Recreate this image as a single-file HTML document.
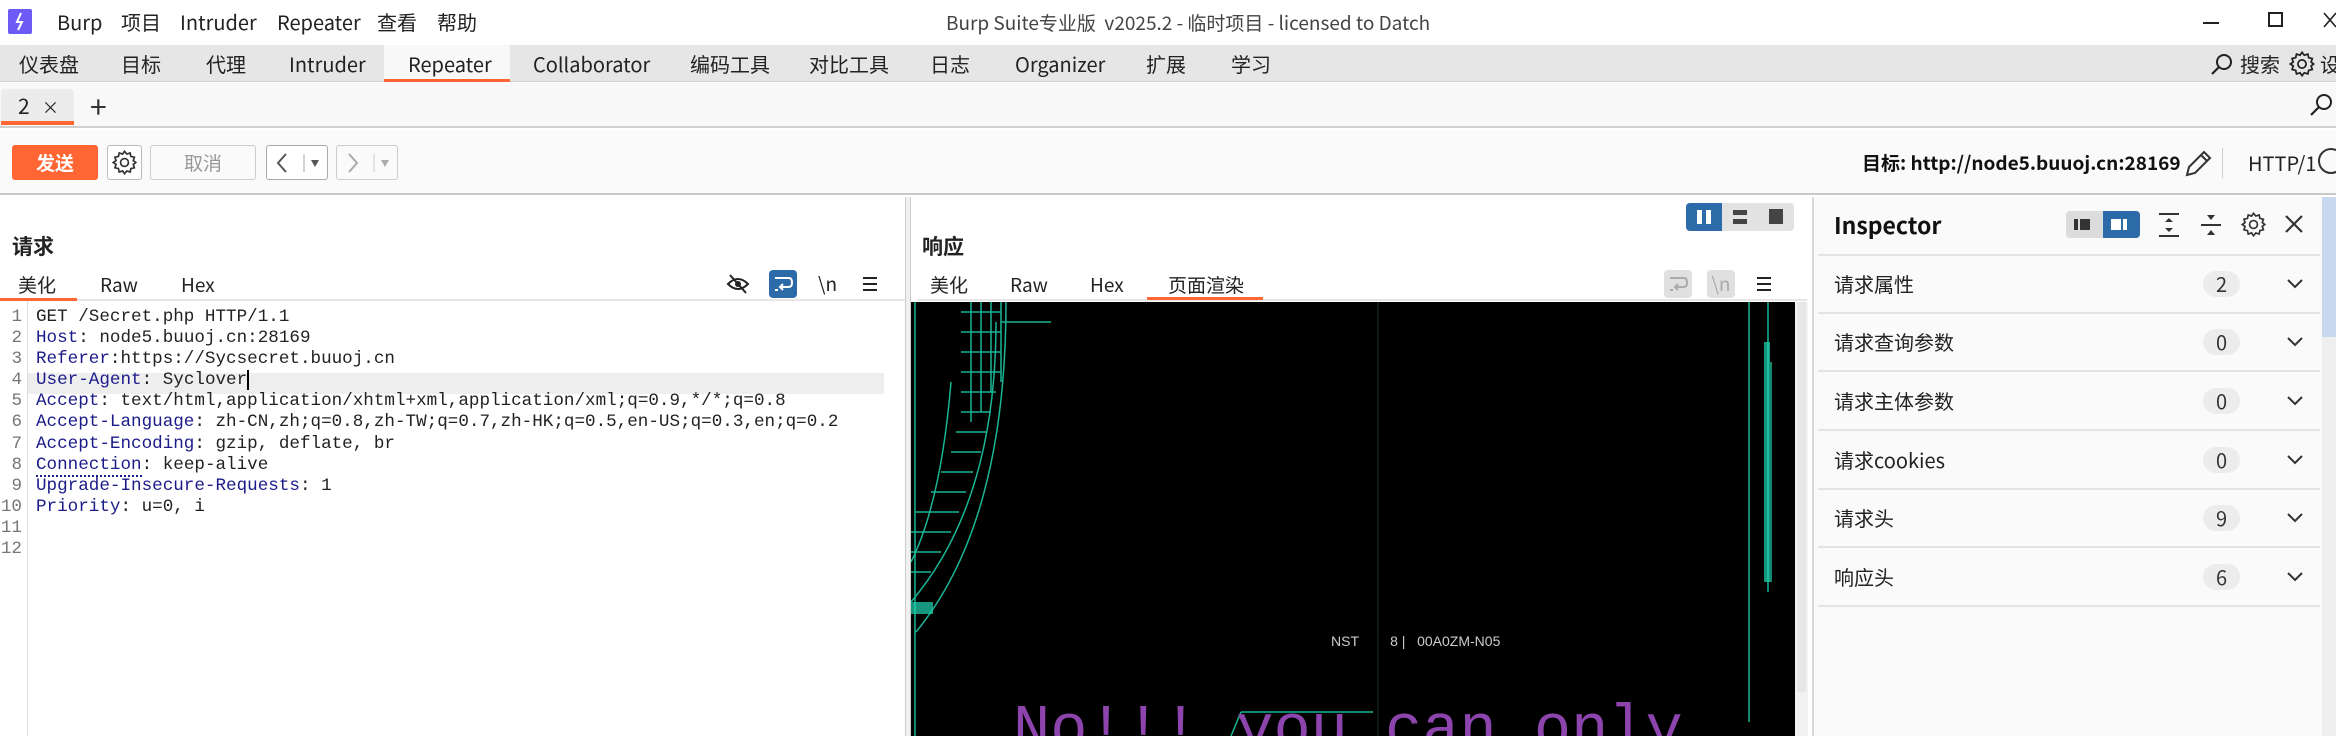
<!DOCTYPE html>
<html><head><meta charset="utf-8"><style>
*{margin:0;padding:0;box-sizing:border-box}
body{width:2336px;height:736px;overflow:hidden;background:#fff;font-family:"Noto Sans CJK SC","Liberation Sans",sans-serif;color:#222;position:relative}
.a{position:absolute;white-space:nowrap;line-height:1}
.f20{font-size:20px}
.mono{font-family:"Liberation Mono","DejaVu Sans Mono",monospace;font-size:17.6px}
.k{color:#1b1b8a}
.ln{color:#777;text-align:right;width:22px}
.row{position:absolute;left:1818px;width:502px;height:58px;border-bottom:2px solid #e3e3e3}
.row .l{position:absolute;left:16px;top:18px;font-size:20px;line-height:1}
.row .b{position:absolute;left:385px;top:15px;width:37px;height:26px;border-radius:13px;background:#ececec;text-align:center;font-size:20px;line-height:26px;color:#333}
.row svg{position:absolute;left:468px;top:22px}
</style></head><body>

<!-- title bar -->
<div class="a" style="left:0;top:0;width:2336px;height:45px;background:#fff"></div>
<div class="a" style="left:8px;top:9px;width:24px;height:25px;background:#6c5cf5;border-radius:2px"></div>
<svg class="a" style="left:8px;top:9px" width="24" height="25"><path d="M13 4 L9 13 L14 13 L10 21" stroke="#fff" stroke-width="2" fill="none"/></svg>
<div class="a f20" style="left:57px;top:12px">Burp</div>
<div class="a f20" style="left:121px;top:12px">项目</div>
<div class="a f20" style="left:180px;top:12px">Intruder</div>
<div class="a f20" style="left:277px;top:12px">Repeater</div>
<div class="a f20" style="left:377px;top:12px">查看</div>
<div class="a f20" style="left:437px;top:12px">帮助</div>
<div class="a" style="left:946px;top:13px;font-size:19px;color:#444">Burp Suite专业版&nbsp; v2025.2 - 临时项目 - licensed to Datch</div>
<div class="a" style="left:2203px;top:22px;width:16px;height:2px;background:#222"></div>
<div class="a" style="left:2268px;top:12px;width:15px;height:15px;border:2px solid #222"></div>
<svg class="a" style="left:2322px;top:12px" width="14" height="16"><path d="M2 1 L14 15 M14 1 L2 15" stroke="#222" stroke-width="1.6"/></svg>

<!-- nav bar -->
<div class="a" style="left:0;top:45px;width:2336px;height:37px;background:#e6e6e6;border-bottom:1px solid #d0d0d0"></div>
<div class="a" style="left:384px;top:45px;width:126px;height:37px;background:#f8f8f8;border-bottom:3px solid #ff6633"></div>
<div class="a f20" style="left:19px;top:54px">仪表盘</div>
<div class="a f20" style="left:121px;top:54px">目标</div>
<div class="a f20" style="left:206px;top:54px">代理</div>
<div class="a f20" style="left:289px;top:54px">Intruder</div>
<div class="a f20" style="left:408px;top:54px">Repeater</div>
<div class="a f20" style="left:533px;top:54px">Collaborator</div>
<div class="a f20" style="left:690px;top:54px">编码工具</div>
<div class="a f20" style="left:809px;top:54px">对比工具</div>
<div class="a f20" style="left:930px;top:54px">日志</div>
<div class="a f20" style="left:1015px;top:54px">Organizer</div>
<div class="a f20" style="left:1146px;top:54px">扩展</div>
<div class="a f20" style="left:1231px;top:54px">学习</div>
<svg class="a" style="left:2210px;top:52px" width="24" height="24"><circle cx="14" cy="10" r="7" stroke="#222" stroke-width="2" fill="none"/><path d="M9 15 L2 22" stroke="#222" stroke-width="2.2"/></svg>
<div class="a f20" style="left:2240px;top:54px">搜索</div>
<svg class="a" style="left:2288px;top:50px" width="28" height="28" viewBox="0 0 24 24"><path d="M12 2l2 2.5 3-1 .7 3.1 3.1.7-1 3L22 12l-2.2 1.7 1 3-3.1.7-.7 3.1-3-1L12 22l-1.7-2.5-3 1-.7-3.1-3.1-.7 1-3L2 12l2.5-1.7-1-3 3.1-.7.7-3.1 3 1z" fill="none" stroke="#222" stroke-width="1.5"/><circle cx="12" cy="12" r="3.5" fill="none" stroke="#222" stroke-width="1.5"/></svg>
<div class="a f20" style="left:2320px;top:54px">设</div>

<!-- sub tab bar -->
<div class="a" style="left:0;top:83px;width:2336px;height:45px;background:#f8f8f8;border-bottom:2px solid #d0d0d0"></div>
<div class="a" style="left:1px;top:89px;width:73px;height:36px;background:#ececec;border-radius:4px 4px 0 0;border-bottom:4px solid #ff6633"></div>
<div class="a" style="left:18px;top:96px;font-size:21px">2</div>
<div class="a" style="left:42px;top:98px;font-size:17px">×</div>
<div class="a" style="left:90px;top:90px;font-size:30px;color:#333">+</div>
<svg class="a" style="left:2308px;top:92px" width="26" height="26"><circle cx="16" cy="10" r="7" stroke="#222" stroke-width="2" fill="none"/><path d="M11 15 L3 23" stroke="#222" stroke-width="2.2"/></svg>

<!-- toolbar -->
<div class="a" style="left:0;top:130px;width:2336px;height:65px;background:#fafafa;border-bottom:2px solid #c8c8c8"></div>
<div class="a" style="left:12px;top:145px;width:86px;height:35px;background:#ff6633;border-radius:3px;color:#fff;font-weight:bold;font-size:19px;text-align:center;line-height:35px">发送</div>
<div class="a" style="left:107px;top:145px;width:35px;height:35px;border:1px solid #bbb;border-radius:3px;background:#fff"></div>
<svg class="a" style="left:111px;top:149px" width="27" height="27" viewBox="0 0 24 24"><path d="M12 2l2 2.5 3-1 .7 3.1 3.1.7-1 3L22 12l-2.2 1.7 1 3-3.1.7-.7 3.1-3-1L12 22l-1.7-2.5-3 1-.7-3.1-3.1-.7 1-3L2 12l2.5-1.7-1-3 3.1-.7.7-3.1 3 1z" fill="none" stroke="#333" stroke-width="1.5"/><circle cx="12" cy="12" r="3.5" fill="none" stroke="#333" stroke-width="1.5"/></svg>
<div class="a" style="left:150px;top:145px;width:106px;height:35px;border:1px solid #ccc;border-radius:3px;background:#fafafa;color:#999;font-size:19px;text-align:center;line-height:33px">取消</div>
<div class="a" style="left:266px;top:145px;width:62px;height:35px;border:1px solid #aaa;border-radius:3px;background:#fff"></div>
<svg class="a" style="left:270px;top:150px" width="56" height="26"><path d="M16 4 L8 13 L16 22" stroke="#555" stroke-width="2" fill="none"/><path d="M34 4 V22" stroke="#aaa"/><path d="M41 10 L49 10 L45 17z" fill="#555"/></svg>
<div class="a" style="left:336px;top:145px;width:62px;height:35px;border:1px solid #ccc;border-radius:3px;background:#fafafa"></div>
<svg class="a" style="left:340px;top:150px" width="56" height="26"><path d="M9 4 L17 13 L9 22" stroke="#aaa" stroke-width="2" fill="none"/><path d="M34 4 V22" stroke="#ccc"/><path d="M41 10 L49 10 L45 17z" fill="#aaa"/></svg>
<div class="a" style="left:1862px;top:153px;font-size:19px;font-weight:bold;color:#111">目标: http://node5.buuoj.cn:28169</div>
<svg class="a" style="left:2183px;top:148px" width="30" height="30"><path d="M4 27 L6 19 L21 4 L27 10 L12 25z M18 7 L24 13" stroke="#333" stroke-width="2" fill="none"/></svg>
<div class="a" style="left:2222px;top:148px;width:1px;height:30px;background:#ccc"></div>
<div class="a" style="left:2248px;top:153px;font-size:20px">HTTP/1</div>
<div class="a" style="left:2318px;top:148px;width:26px;height:26px;border:2px solid #333;border-radius:50%"></div>

<!-- request panel -->
<div class="a" style="left:0;top:197px;width:906px;height:539px;background:#fff"></div>
<div class="a" style="left:12px;top:236px;font-size:21px;font-weight:bold">请求</div>
<div class="a" style="left:18px;top:275px;font-size:19px">美化</div>
<div class="a" style="left:100px;top:275px;font-size:19px">Raw</div>
<div class="a" style="left:181px;top:275px;font-size:19px">Hex</div>
<div class="a" style="left:0;top:299px;width:906px;height:2px;background:#e6e6e6"></div>
<div class="a" style="left:0;top:298px;width:77px;height:3px;background:#ff6633"></div>
<svg class="a" style="left:726px;top:272px" width="24" height="24"><path d="M2 12 Q12 2 22 12 Q12 22 2 12z" fill="none" stroke="#222" stroke-width="2"/><circle cx="12" cy="12" r="3" fill="#222"/><path d="M4 3 L20 21" stroke="#222" stroke-width="2"/></svg>
<div class="a" style="left:769px;top:270px;width:28px;height:28px;background:#2c6aa8;border-radius:4px"></div>
<svg class="a" style="left:773px;top:274px" width="20" height="20"><path d="M2 4 H16 Q19 4 19 9 Q19 13 15 13 H8 M10 10 L7 13 L10 16 M2 16 H5" stroke="#fff" stroke-width="2" fill="none"/></svg>
<div class="a" style="left:818px;top:274px;font-size:19px">\n</div>
<svg class="a" style="left:862px;top:276px" width="16" height="16"><path d="M1 2H15M1 8H15M1 14H15" stroke="#222" stroke-width="2"/></svg>
<div class="a" style="left:27px;top:301px;width:1px;height:435px;background:#ddd"></div>
<div class="a" style="left:28px;top:373px;width:856px;height:21px;background:#eeeeee"></div>
<div class="a mono" style="left:0;top:307px;line-height:21.1px">
<div style="display:flex"><div class="ln">1</div><div style="margin-left:14px">GET /Secret.php HTTP/1.1</div></div>
<div style="display:flex"><div class="ln">2</div><div style="margin-left:14px"><span class="k">Host</span>: node5.buuoj.cn:28169</div></div>
<div style="display:flex"><div class="ln">3</div><div style="margin-left:14px"><span class="k">Referer</span>:https://Sycsecret.buuoj.cn</div></div>
<div style="display:flex"><div class="ln">4</div><div style="margin-left:14px"><span class="k">User-Agent</span>: Syclover<span style="border-left:2px solid #000"></span></div></div>
<div style="display:flex"><div class="ln">5</div><div style="margin-left:14px"><span class="k">Accept</span>: text/html,application/xhtml+xml,application/xml;q=0.9,*/*;q=0.8</div></div>
<div style="display:flex"><div class="ln">6</div><div style="margin-left:14px"><span class="k">Accept-Language</span>: zh-CN,zh;q=0.8,zh-TW;q=0.7,zh-HK;q=0.5,en-US;q=0.3,en;q=0.2</div></div>
<div style="display:flex"><div class="ln">7</div><div style="margin-left:14px"><span class="k">Accept-Encoding</span>: gzip, deflate, br</div></div>
<div style="display:flex"><div class="ln">8</div><div style="margin-left:14px"><span class="k" style="border-bottom:2px dotted #1b1b8a">Connection</span>: keep-alive</div></div>
<div style="display:flex"><div class="ln">9</div><div style="margin-left:14px"><span class="k">Upgrade-Insecure-Requests</span>: 1</div></div>
<div style="display:flex"><div class="ln">10</div><div style="margin-left:14px"><span class="k">Priority</span>: u=0, i</div></div>
<div style="display:flex"><div class="ln">11</div></div>
<div style="display:flex"><div class="ln">12</div></div>
</div>

<!-- divider -->
<div class="a" style="left:905px;top:197px;width:6px;height:539px;background:#f0f0f0;border-left:1px solid #ccc;border-right:1px solid #ccc"></div>

<!-- response panel -->
<div class="a" style="left:922px;top:236px;font-size:21px;font-weight:bold">响应</div>
<div class="a" style="left:1686px;top:203px;width:108px;height:28px;background:#e2e2e2;border-radius:4px"></div>
<div class="a" style="left:1686px;top:203px;width:36px;height:28px;background:#2c6aa8;border-radius:4px 0 0 4px"></div>
<div class="a" style="left:1697px;top:210px;width:5px;height:14px;background:#fff"></div>
<div class="a" style="left:1706px;top:210px;width:5px;height:14px;background:#fff"></div>
<div class="a" style="left:1733px;top:210px;width:14px;height:5px;background:#444"></div>
<div class="a" style="left:1733px;top:219px;width:14px;height:5px;background:#444"></div>
<div class="a" style="left:1769px;top:209px;width:14px;height:15px;background:#444"></div>
<div class="a" style="left:930px;top:275px;font-size:19px">美化</div>
<div class="a" style="left:1010px;top:275px;font-size:19px">Raw</div>
<div class="a" style="left:1090px;top:275px;font-size:19px">Hex</div>
<div class="a" style="left:1168px;top:275px;font-size:19px">页面渲染</div>
<div class="a" style="left:917px;top:299px;width:890px;height:2px;background:#e6e6e6"></div>
<div class="a" style="left:1147px;top:297px;width:116px;height:3px;background:#ff6633"></div>
<div class="a" style="left:1664px;top:270px;width:28px;height:28px;background:#e0e0e0;border-radius:4px"></div>
<svg class="a" style="left:1668px;top:274px" width="20" height="20"><path d="M2 4 H16 Q19 4 19 9 Q19 13 15 13 H8 M10 10 L7 13 L10 16 M2 16 H5" stroke="#aaa" stroke-width="2" fill="none"/></svg>
<div class="a" style="left:1707px;top:270px;width:28px;height:28px;background:#e0e0e0;border-radius:4px;color:#aaa;font-size:19px;text-align:center;line-height:28px">\n</div>
<svg class="a" style="left:1756px;top:276px" width="16" height="16"><path d="M1 2H15M1 8H15M1 14H15" stroke="#222" stroke-width="2"/></svg>

<!-- rendered page -->
<div class="a" style="left:911px;top:302px;width:884px;height:434px;background:#000;overflow:hidden">
<svg width="884" height="434" style="position:absolute;left:0;top:0">
<g stroke="#1fd6b0" fill="none" stroke-width="1.5" opacity="0.85">
<path d="M60 0 V120 M70 0 V110 M80 0 V90 M90 0 V80"/>
<path d="M50 10 H90 M50 30 H90 M50 50 H90 M50 70 H90 M50 90 H85 M50 110 H80 M45 130 H75 M40 150 H70 M30 170 H62 M20 190 H55 M5 210 H48 M0 230 H40 M0 250 H30 M0 270 H20"/>
<path d="M95 0 Q95 220 5 330"/>
<path d="M85 20 Q85 200 0 300"/>
<path d="M40 80 Q30 200 0 260"/>
<path d="M90 20 H140"/>
<path d="M4 0 V434"/>
<path d="M838 0 V420 M857 0 V290 M860 60 V280"/>
<path d="M330 410 H462 M320 434 L330 410"/>
<path d="M467 0 V434" stroke="#0c2a24"/>
</g>
<g fill="#1fd6b0" opacity="0.7"><rect x="0" y="300" width="22" height="12"/><rect x="853" y="40" width="6" height="240"/></g>
<text x="420" y="344" fill="#ccc" font-size="14" font-family="Liberation Sans">NST&#160;&#160;&#160;&#160;&#160;&#160;&#160; 8 |&#160;&#160; 00A0ZM-N05</text>
</svg>
<div class="a" style="left:102px;top:398px;font-family:'Liberation Mono',monospace;font-size:62px;line-height:62px;color:#8e44ad">No!!! you can only</div>
</div>
<div class="a" style="left:1795px;top:302px;width:13px;height:434px;background:#f2f2f2"></div>
<div class="a" style="left:1797px;top:302px;width:9px;height:390px;background:#e6e6e6"></div>

<!-- inspector -->
<div class="a" style="left:1812px;top:197px;width:510px;height:539px;background:#fafafa;border-left:2px solid #d8d8d8"></div>
<div class="a" style="left:1834px;top:213px;font-size:23px;font-weight:bold;color:#111">Inspector</div>
<div class="a" style="left:2066px;top:211px;width:74px;height:27px;background:#dcdcdc;border-radius:4px"></div>
<div class="a" style="left:2103px;top:211px;width:37px;height:27px;background:#2c6aa8;border-radius:0 4px 4px 0"></div>
<div class="a" style="left:2074px;top:219px;width:4px;height:11px;background:#333"></div>
<div class="a" style="left:2080px;top:219px;width:10px;height:11px;background:#333"></div>
<div class="a" style="left:2111px;top:219px;width:10px;height:11px;background:#fff"></div>
<div class="a" style="left:2123px;top:219px;width:4px;height:11px;background:#fff"></div>
<svg class="a" style="left:2158px;top:212px" width="22" height="26"><path d="M1 2H21M1 24H21" stroke="#333" stroke-width="2"/><path d="M7 10 L11 6 L15 10z M7 16 L11 20 L15 16z" fill="#333"/></svg>
<svg class="a" style="left:2200px;top:212px" width="22" height="26"><path d="M1 13H21" stroke="#333" stroke-width="2"/><path d="M7 3 L11 8 L15 3z M7 23 L11 18 L15 23z" fill="#333"/></svg>
<svg class="a" style="left:2240px;top:211px" width="27" height="27" viewBox="0 0 24 24"><path d="M12 2l2 2.5 3-1 .7 3.1 3.1.7-1 3L22 12l-2.2 1.7 1 3-3.1.7-.7 3.1-3-1L12 22l-1.7-2.5-3 1-.7-3.1-3.1-.7 1-3L2 12l2.5-1.7-1-3 3.1-.7.7-3.1 3 1z" fill="none" stroke="#333" stroke-width="1.5"/><circle cx="12" cy="12" r="3.5" fill="none" stroke="#333" stroke-width="1.5"/></svg>
<svg class="a" style="left:2284px;top:214px" width="20" height="20"><path d="M2 2 L18 18 M18 2 L2 18" stroke="#333" stroke-width="2.2"/></svg>
<div class="a" style="left:1818px;top:254px;width:502px;height:2px;background:#e3e3e3"></div>

<div class="row" style="top:256px"><div class="l">请求属性</div><div class="b">2</div><svg width="18" height="12"><path d="M2 2 L9 9 L16 2" stroke="#333" stroke-width="2" fill="none"/></svg></div>
<div class="row" style="top:314px"><div class="l">请求查询参数</div><div class="b">0</div><svg width="18" height="12"><path d="M2 2 L9 9 L16 2" stroke="#333" stroke-width="2" fill="none"/></svg></div>
<div class="row" style="top:373px"><div class="l">请求主体参数</div><div class="b">0</div><svg width="18" height="12"><path d="M2 2 L9 9 L16 2" stroke="#333" stroke-width="2" fill="none"/></svg></div>
<div class="row" style="top:432px"><div class="l">请求cookies</div><div class="b">0</div><svg width="18" height="12"><path d="M2 2 L9 9 L16 2" stroke="#333" stroke-width="2" fill="none"/></svg></div>
<div class="row" style="top:490px"><div class="l">请求头</div><div class="b">9</div><svg width="18" height="12"><path d="M2 2 L9 9 L16 2" stroke="#333" stroke-width="2" fill="none"/></svg></div>
<div class="row" style="top:549px"><div class="l">响应头</div><div class="b">6</div><svg width="18" height="12"><path d="M2 2 L9 9 L16 2" stroke="#333" stroke-width="2" fill="none"/></svg></div>

<!-- right scrollbar strip -->
<div class="a" style="left:2322px;top:197px;width:14px;height:539px;background:#eeeeee"></div>
<div class="a" style="left:2322px;top:197px;width:14px;height:140px;background:#c8d8ee"></div>
</body></html>
